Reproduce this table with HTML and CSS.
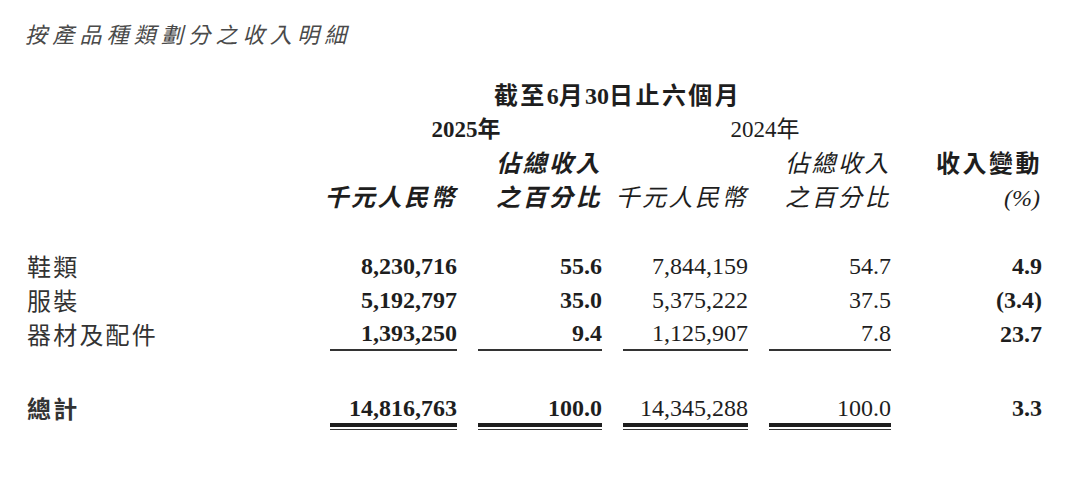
FILE: index.html
```html
<!DOCTYPE html>
<html lang="zh-Hant">
<head>
<meta charset="utf-8">
<title>按產品種類劃分之收入明細</title>
<link rel="stylesheet" href="styles.css">
</head>
<body>
<div class="page">
  <h1 class="title">按產品種類劃分之收入明細</h1>
  <div class="table">
    <div class="period">截至<span class="digits">6</span>月<span class="digits">30</span>日止六個月</div>

    <div class="year y25">2025年</div>
    <div class="year y24">2024年</div>

    <div class="hd b i c2">佔總收入</div>
    <div class="hd i c4">佔總收入</div>
    <div class="hd b c6">收入變動</div>

    <div class="hd b i c1">千元人民幣</div>
    <div class="hd b i c2">之百分比</div>
    <div class="hd i c3">千元人民幣</div>
    <div class="hd i c4">之百分比</div>
    <div class="hd i c6 pct">(%)</div>

    <div class="spacer"></div>

    <div class="label">鞋類</div>
    <div class="num b">8,230,716</div>
    <div class="num b">55.6</div>
    <div class="num">7,844,159</div>
    <div class="num">54.7</div>
    <div class="num b">4.9</div>

    <div class="label">服裝</div>
    <div class="num b">5,192,797</div>
    <div class="num b">35.0</div>
    <div class="num">5,375,222</div>
    <div class="num">37.5</div>
    <div class="num b">(3.4)</div>

    <div class="label">器材及配件</div>
    <div class="num b under">1,393,250</div>
    <div class="num b under">9.4</div>
    <div class="num under">1,125,907</div>
    <div class="num under">7.8</div>
    <div class="num b">23.7</div>

    <div class="gap"></div>

    <div class="label total-label">總計</div>
    <div class="num b total dbl">14,816,763</div>
    <div class="num b total dbl">100.0</div>
    <div class="num total dbl">14,345,288</div>
    <div class="num total dbl">100.0</div>
    <div class="num b total">3.3</div>
  </div>
</div>
</body>
</html>
```

FILE: styles.css
```css
html, body {
  margin: 0;
  padding: 0;
  background: #ffffff;
}

.page {
  padding: 19px 0 0 25px;
  color: #1e1e1e;
}

.title {
  margin: 0;
  font-family: "Noto Sans CJK TC", sans-serif;
  font-weight: 400;
  font-style: italic;
  font-size: 22px;
  letter-spacing: 5.2px;
  line-height: 28px;
  color: #4a4a4a;
}

.table {
  display: grid;
  grid-template-columns: 284px 127px 124px 125px 122px 130px;
  column-gap: 21px;
  margin-top: 32px;
  font-family: "Liberation Serif", "Noto Sans CJK TC", serif;
  font-size: 24px;
  line-height: 34px;
}

.period {
  grid-column: 2 / 6;
  text-align: center;
  font-weight: 700;
  padding-left: 14px;
  letter-spacing: 2.4px;
  white-space: nowrap;
}

.digits {
  letter-spacing: 0;
}

.year {
  text-align: center;
  font-weight: 700;
  font-size: 23px;
}

.y25 {
  grid-column: 2 / 4;
}

.y24 {
  grid-column: 4 / 6;
  font-weight: 400;
  padding-left: 16px;
}

.hd {
  display: flex;
  justify-content: flex-end;
  white-space: nowrap;
  letter-spacing: 2.5px;
}

.c1 { grid-column: 2; }
.c2 { grid-column: 3; }
.c3 { grid-column: 4; }
.c4 { grid-column: 5; }
.c6 { grid-column: 6; }

.b { font-weight: 700; }
.i { font-style: italic; }

.pct {
  letter-spacing: 0;
  padding-right: 2px;
}

.spacer {
  grid-column: 1 / -1;
  height: 34px;
}

.gap {
  grid-column: 1 / -1;
  height: 42px;
}

.label {
  grid-column: 1;
  padding-left: 2px;
  font-family: "Noto Sans CJK TC", sans-serif;
  font-size: 24px;
  letter-spacing: 2.2px;
  color: #333333;
}

.total-label {
  font-weight: 700;
  line-height: 30px;
}

.num {
  text-align: right;
  font-size: 24px;
}

.under {
  border-bottom: 2px solid #333333;
  line-height: 32px;
}

.total {
  line-height: 30px;
}

.dbl {
  display: flex;
  flex-direction: column;
  align-items: stretch;
}

.dbl::after {
  content: "";
  display: block;
  height: 2px;
  border-top: 4px solid #1e1e1e;
  border-bottom: 1px solid #333333;
}
```
